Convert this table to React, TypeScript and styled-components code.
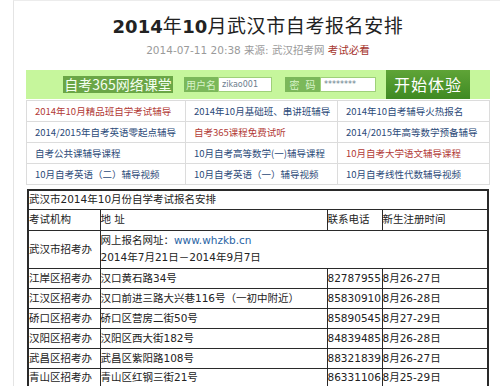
import React from "react";
import styled, { createGlobalStyle } from "styled-components";

const Global = createGlobalStyle`
  html, body { margin: 0; padding: 0; background: #fff; }
  body { font-family: "DejaVu Sans", "Noto Sans CJK SC", sans-serif; }
  * { box-sizing: border-box; }
`;

const Page = styled.div`
  margin-left: 13px;
  height: 386px;
  overflow: hidden;
  border-left: 1px solid #e4e4e4;
  border-top: 1px solid #ececec;
  padding: 0 10px 0 12px;
`;

const Header = styled.div`
  padding-top: 11px;
  text-align: center;
`;

const Title = styled.h1`
  margin: 0;
  font-family: "Noto Sans CJK SC", sans-serif;
  font-size: 19px;
  line-height: 26px;
  font-weight: 400;
  color: #222;
  letter-spacing: 0.6px;
`;

const Num = styled.span`
  font-family: "DejaVu Sans", sans-serif;
  font-weight: 700;
  font-size: 18px;
  letter-spacing: 0;
`;

const Meta = styled.div`
  margin-top: 3px;
  font-size: 10.5px;
  line-height: 14px;
  color: #9a9a9a;
`;

const Hot = styled.span`
  color: #a6352e;
`;

const Banner = styled.div`
  margin-top: 13px;
  height: 29px;
  background: #c6f69c;
  display: flex;
  align-items: center;
  padding-left: 37px;
`;

const Brand = styled.div`
  width: 110px;
  height: 17px;
  background: #6aa646;
  color: #f4fff0;
  font-family: "Noto Sans CJK SC", sans-serif;
  font-size: 14px;
  line-height: 17px;
  text-align: center;
  margin-right: 11px;
`;

const Label = styled.div<{ $w: number; $ml?: number }>`
  width: ${(p) => p.$w}px;
  margin-left: ${(p) => p.$ml ?? 0}px;
  height: 15px;
  background: #7bb85a;
  color: #d8f3c8;
  font-family: "Noto Sans CJK SC", sans-serif;
  font-size: 10px;
  line-height: 15px;
  text-align: center;
  word-spacing: 4px;
`;

const Field = styled.div<{ $w: number }>`
  width: ${(p) => p.$w}px;
  height: 15px;
  background: #fff;
  border: 1px solid #9fd07a;
  color: #6b7c8c;
  font-size: 8px;
  line-height: 13px;
  padding-left: 3px;
`;

const Go = styled.div`
  margin-left: 10px;
  width: 84px;
  height: 29px;
  background: linear-gradient(#5fa437, #3f8a23);
  color: #fff;
  font-family: "Noto Sans CJK SC", sans-serif;
  font-size: 16px;
  line-height: 29px;
  text-align: center;
  letter-spacing: 1px;
`;

const Links = styled.table`
  border-collapse: collapse;
  width: 464px;
  table-layout: fixed;
  margin-top: 1px;
`;

const LinkCell = styled.td<{ $hot?: boolean }>`
  border: 1px solid #dcdcdc;
  height: 21px;
  padding: 0 0 0 8px;
  font-family: "Noto Sans CJK SC", sans-serif;
  font-size: 9.5px;
  line-height: 12px;
  color: ${(p) => (p.$hot ? "#b23a36" : "#2b4a78")};
  white-space: nowrap;
  overflow: hidden;
`;

const Main = styled.table`
  margin-top: 4px;
  margin-left: 1px;
  border-collapse: collapse;
  width: 462px;
  table-layout: fixed;
  border: 2px solid #2a2a2a;
`;

const Cell = styled.td<{ $h?: number }>`
  border: 1px solid #2a2a2a;
  height: ${(p) => p.$h ?? 20}px;
  padding: 0;
  font-size: 10.5px;
  line-height: 17px;
  color: #222;
  white-space: nowrap;
  overflow: visible;
  vertical-align: middle;
`;

const Url = styled.span`
  color: #2a64a4;
`;

const links: [string, boolean][][] = [
  [["2014年10月精品班自学考试辅导", true], ["2014年10月基础班、串讲班辅导", false], ["2014年10自考辅导火热报名", false]],
  [["2014/2015年自考英语零起点辅导", false], ["自考365课程免费试听", true], ["2014/2015年高等数学预备辅导", false]],
  [["自考公共课辅导课程", false], ["10月自考高等数学(一)辅导课程", false], ["10月自考大学语文辅导课程", true]],
  [["10月自考英语（二）辅导视频", false], ["10月自考英语（一）辅导视频", false], ["10月自考线性代数辅导视频", false]],
];

const rows = [
  ["江岸区招考办", "汉口黄石路34号", "82787955", "8月26-27日"],
  ["江汉区招考办", "汉口前进三路大兴巷116号（一初中附近）", "85830910", "8月26-28日"],
  ["硚口区招考办", "硚口区营房二街50号", "85890545", "8月27-29日"],
  ["汉阳区招考办", "汉阳区西大街182号", "84839485", "8月26-28日"],
  ["武昌区招考办", "武昌区紫阳路108号", "88321839", "8月26-27日"],
  ["青山区招考办", "青山区红钢三街21号", "86331106", "8月25-29日"],
];

export default function App() {
  return (
    <>
      <Global />
      <Page>
        <Header>
          <Title>
            <Num>2014</Num>年<Num>10</Num>月武汉市自考报名安排
          </Title>
          <Meta>
            2014-07-11 20:38 来源: 武汉招考网 <Hot>考试必看</Hot>
          </Meta>
        </Header>
        <Banner>
          <Brand>自考365网络课堂</Brand>
          <Label $w={34}>用户名</Label>
          <Field $w={54}>zikao001</Field>
          <Label $w={35} $ml={13}>密 码</Label>
          <Field $w={56}>********</Field>
          <Go>开始体验</Go>
        </Banner>
        <Links>
          <colgroup>
            <col style={{ width: 159 }} />
            <col style={{ width: 152 }} />
            <col />
          </colgroup>
          <tbody>
            {links.map((r, i) => (
              <tr key={i}>
                {r.map(([t, hot], j) => (
                  <LinkCell key={j} $hot={hot}>{t}</LinkCell>
                ))}
              </tr>
            ))}
          </tbody>
        </Links>
        <Main>
          <colgroup>
            <col style={{ width: 72 }} />
            <col style={{ width: 227 }} />
            <col style={{ width: 55 }} />
            <col />
          </colgroup>
          <tbody>
            <tr>
              <Cell colSpan={4} $h={19}>武汉市2014年10月份自学考试报名安排</Cell>
            </tr>
            <tr>
              <Cell $h={21}>考试机构</Cell>
              <Cell>地 址</Cell>
              <Cell>联系电话</Cell>
              <Cell>新生注册时间</Cell>
            </tr>
            <tr>
              <Cell $h={38}>武汉市招考办</Cell>
              <Cell colSpan={3}>
                网上报名网址：<Url>www.whzkb.cn</Url>
                <br />
                2014年7月21日－2014年9月7日
              </Cell>
            </tr>
            {rows.map((r, i) => (
              <tr key={i}>
                {r.map((c, j) => (
                  <Cell key={j}>{c}</Cell>
                ))}
              </tr>
            ))}
          </tbody>
        </Main>
      </Page>
    </>
  );
}
